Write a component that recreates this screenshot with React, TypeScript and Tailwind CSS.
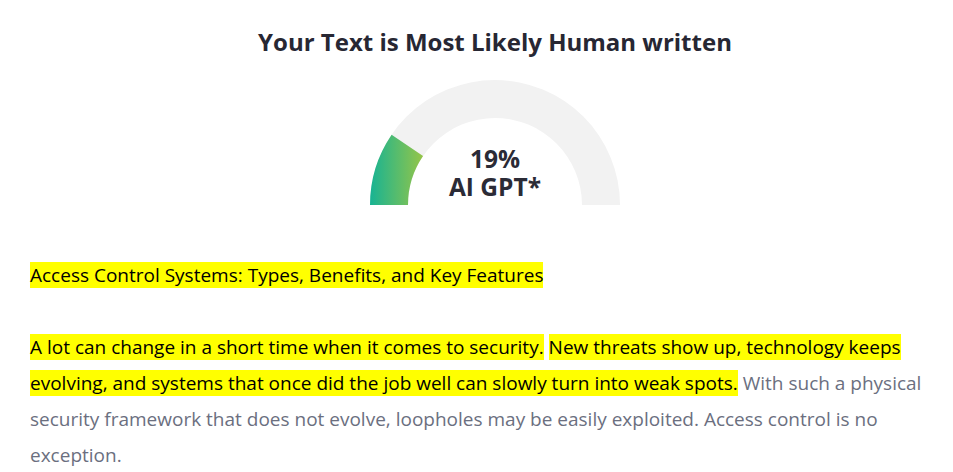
import React from "react";

function Gauge() {
  const cx = 125, cy = 125, R = 125, r = 87;
  const pct = 0.19;
  const a = Math.PI - pct * Math.PI;
  const ox = cx + R * Math.cos(a), oy = cy - R * Math.sin(a);
  const ix = cx + r * Math.cos(a), iy = cy - r * Math.sin(a);
  const bg = `M0 125 A125 125 0 0 1 250 125 L212 125 A87 87 0 0 0 38 125 Z`;
  const fg = `M0 125 A125 125 0 0 1 ${ox} ${oy} L${ix} ${iy} A87 87 0 0 0 38 125 Z`;
  return (
    <svg width="250" height="125" viewBox="0 0 250 125" className="block">
      <defs>
        <linearGradient id="g" x1="0" y1="0" x2="1" y2="0">
          <stop offset="0" stopColor="#17b393" />
          <stop offset="1" stopColor="#95c548" />
        </linearGradient>
      </defs>
      <path d={bg} fill="#f2f2f2" />
      <path d={fg} fill="url(#g)" />
    </svg>
  );
}

export default function App() {
  const hl = "bg-[#ffff00] text-black";
  return (
    <div className="w-[953px] h-[472px] bg-white overflow-hidden" style={{ fontFamily: '"Open Sans", "Noto Sans", sans-serif' }}>
      <div className="pl-[37px] flex flex-col items-center">
        <h1 className="mt-[26px] text-[24px] leading-[32px] font-bold text-[#272733]">
          Your Text is Most Likely Human written
        </h1>
        <div className="relative mt-[22px]">
          <Gauge />
          <div className="absolute left-0 right-0 top-[65px] flex flex-col items-center text-[24.5px] leading-[28px] font-bold text-[#2b2b36]">
            <span>19%</span>
            <span>AI GPT*</span>
          </div>
        </div>
      </div>
      <div className="pl-[30px] w-[940px] text-[19px] leading-[36px] text-[#6b6f7f]">
        <p className="mt-[52px]">
          <span className={hl}>Access Control Systems: Types, Benefits, and Key Features</span>
        </p>
        <p className="mt-[36px]">
          <span className={hl}>A lot can change in a short time when it comes to security.</span>{" "}
          <span className={hl}>New threats show up, technology keeps </span>
          <br />
          <span className={hl}>evolving, and systems that once did the job well can slowly turn into weak spots.</span>{" "}
          With such a physical
          <br />
          security framework that does not evolve, loopholes may be easily exploited. Access control is no
          <br />
          exception.
        </p>
      </div>
    </div>
  );
}
